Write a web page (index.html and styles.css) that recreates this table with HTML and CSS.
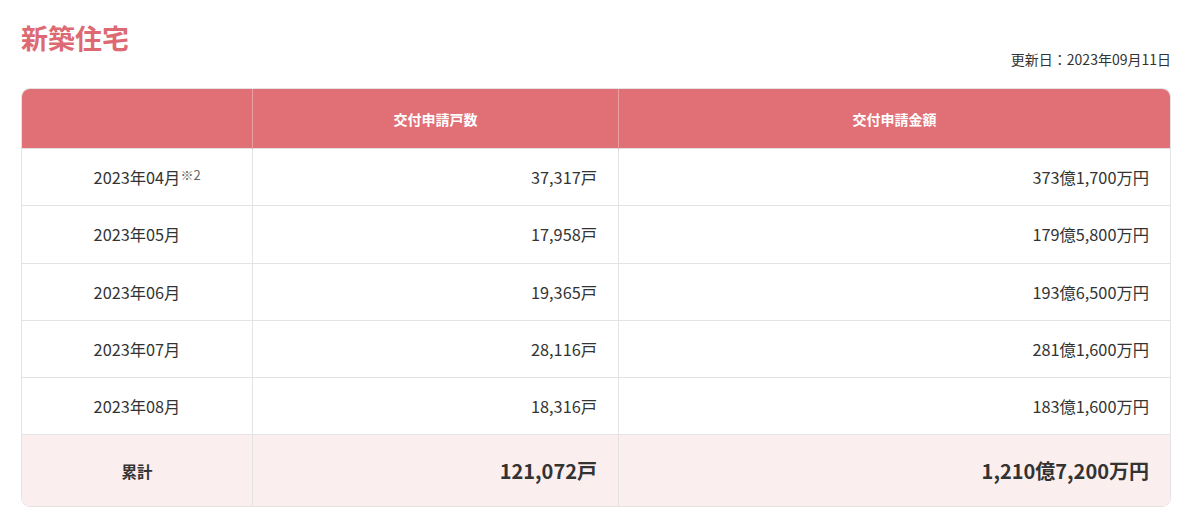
FILE: index.html
```html
<!DOCTYPE html>
<html lang="ja">
<head>
    <meta charset="UTF-8">
    <title>新築住宅</title>
    <link rel="stylesheet" href="styles.css">
</head>
<body>
    <div class="section">
        <h2 class="title">新築住宅</h2>
        <p class="updated">更新日：2023年09月11日</p>
        <div class="table-wrap">
            <table class="stats">
                <thead>
                    <tr>
                        <th class="col-month"></th>
                        <th class="col-count">交付申請戸数</th>
                        <th class="col-amount">交付申請金額</th>
                    </tr>
                </thead>
                <tbody>
                    <tr>
                        <td class="month"><span class="noted">2023年04月<sup>※2</sup></span></td>
                        <td class="num">37,317戸</td>
                        <td class="num">373億1,700万円</td>
                    </tr>
                    <tr>
                        <td class="month">2023年05月</td>
                        <td class="num">17,958戸</td>
                        <td class="num">179億5,800万円</td>
                    </tr>
                    <tr>
                        <td class="month">2023年06月</td>
                        <td class="num">19,365戸</td>
                        <td class="num">193億6,500万円</td>
                    </tr>
                    <tr>
                        <td class="month">2023年07月</td>
                        <td class="num">28,116戸</td>
                        <td class="num">281億1,600万円</td>
                    </tr>
                    <tr>
                        <td class="month">2023年08月</td>
                        <td class="num">18,316戸</td>
                        <td class="num">183億1,600万円</td>
                    </tr>
                    <tr class="total">
                        <td class="month">累計</td>
                        <td class="num">121,072戸</td>
                        <td class="num">1,210億7,200万円</td>
                    </tr>
                </tbody>
            </table>
        </div>
    </div>
</body>
</html>
```

FILE: styles.css
```css
body, html {
    margin: 0;
    padding: 0;
    background: #fff;
    font-family: "Noto Sans CJK JP", "Noto Sans", sans-serif;
    color: #333;
}

.section {
    padding: 19px 29px 0 21px;
    display: flex;
    flex-direction: column;
}

.title {
    margin: 0;
    font-size: 27px;
    line-height: 38px;
    font-weight: 700;
    color: #dd6a72;
}

.updated {
    margin: -8px 0 0;
    text-align: right;
    font-size: 14px;
    line-height: 20px;
    color: #333;
}

.table-wrap {
    margin-top: 19px;
    border: 1px solid #e3e3e3;
    border-radius: 9px;
    overflow: hidden;
}

.stats {
    width: 100%;
    border-collapse: collapse;
    table-layout: fixed;
    font-size: 16.3px;
}

.col-month {
    width: 230px;
}

.col-count {
    width: 365px;
}

.stats th {
    background: #e07075;
    color: #fff;
    font-weight: 700;
    font-size: 14px;
    height: 59px;
    padding: 0;
    border-left: 1px solid #ec9fa2;
}

.stats th:first-child,
.stats td:first-child {
    border-left: none;
}

.stats td {
    height: 56.3px;
    padding: 0 21px;
    border-top: 1px solid #e3e3e3;
    border-left: 1px solid #e3e3e3;
}

.stats td.month {
    text-align: center;
}

.stats td.num {
    text-align: right;
}

.noted {
    position: relative;
}

.noted sup {
    position: absolute;
    left: 100%;
    top: 3px;
    font-size: 13px;
    line-height: 1;
    color: #666;
    white-space: nowrap;
}

.stats tr.total td {
    height: 71px;
    background: #fbeeef;
    font-weight: 700;
    font-size: 20px;
}

.stats tr.total td.month {
    font-size: 15.5px;
}
```
